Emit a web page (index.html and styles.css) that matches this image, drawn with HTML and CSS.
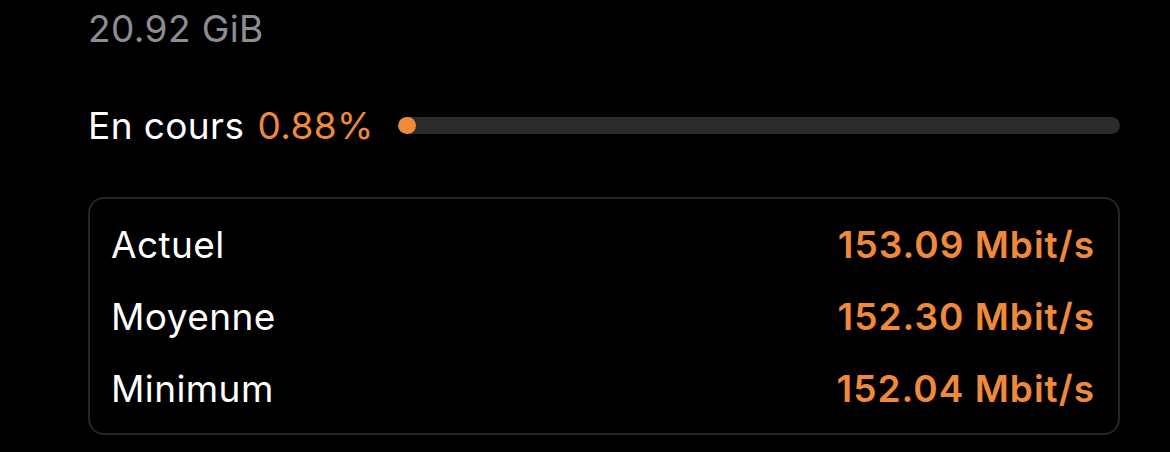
FILE: index.html
```html
<!DOCTYPE html>
<html lang="fr">
<head>
    <meta charset="UTF-8">
    <meta name="viewport" content="width=device-width, initial-scale=1.0">
    <title>Téléchargement</title>
    <link rel="stylesheet" href="styles.css">
</head>
<body>
    <div class="panel">
        <div class="size">20.92 GiB</div>

        <div class="progress-row">
            <span class="label">En cours</span>
            <span class="percent">0.88%</span>
            <div class="track">
                <div class="fill" style="width: 0.88%"></div>
            </div>
        </div>

        <div class="stats">
            <div class="stat">
                <span class="stat-name">Actuel</span>
                <span class="stat-value">153.09 Mbit/s</span>
            </div>
            <div class="stat">
                <span class="stat-name">Moyenne</span>
                <span class="stat-value">152.30 Mbit/s</span>
            </div>
            <div class="stat">
                <span class="stat-name">Minimum</span>
                <span class="stat-value">152.04 Mbit/s</span>
            </div>
        </div>
    </div>
</body>
</html>
```

FILE: styles.css
```css
body {
    margin: 0;
    background: #000;
    color: #fff;
    font-family: Inter, "Noto Sans", sans-serif;
    font-size: 37px;
    letter-spacing: 0.4px;
}

.panel {
    width: 1032px;
    margin-left: 88px;
}

.size {
    line-height: 58px;
    color: #8d8d92;
}

.progress-row {
    display: flex;
    align-items: center;
    height: 44px;
    margin-top: 45px;
}

.percent {
    color: #f0893a;
    margin-left: 13px;
}

.track {
    flex: 1;
    height: 17px;
    margin-left: 24px;
    border-radius: 9px;
    background: #2c2c2e;
    overflow: hidden;
}

.fill {
    min-width: 18px;
    height: 100%;
    border-radius: 9px;
    background: #f0893a;
}

.stats {
    margin-top: 50px;
    padding: 9px 23px 9px 21px;
    border: 2px solid #262628;
    border-radius: 16px;
}

.stat {
    display: flex;
    justify-content: space-between;
    align-items: center;
    height: 72px;
}

.stat-value {
    color: #f0893a;
    font-weight: 600;
    letter-spacing: 1px;
}
```
